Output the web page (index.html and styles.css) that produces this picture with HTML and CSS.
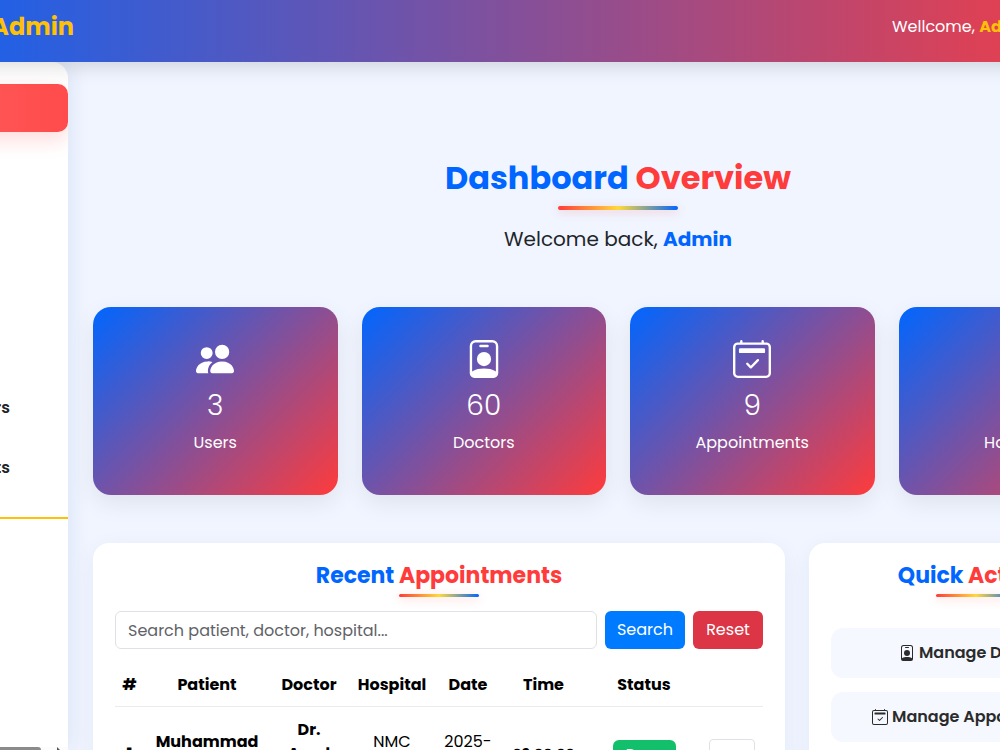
FILE: index.html
```
<!DOCTYPE html>
<html lang="en">
  <head>
    <meta charset="UTF-8" />
    <meta name="viewport" content="width=device-width, initial-scale=1.0" />
    <title>Admin Dashboard</title>
    <link rel="stylesheet" href="styles.css">
  </head>
  <body>
    <!-- Shared icons -->
    <svg class="sprite" aria-hidden="true">
      <symbol id="icon-people" viewBox="0 0 16 16">
        <path d="M7 14s-1 0-1-1 1-4 5-4 5 3 5 4-1 1-1 1zm4-6a3 3 0 1 0 0-6 3 3 0 0 0 0 6m-5.784 6A2.24 2.24 0 0 1 5 13c0-1.355.68-2.75 1.936-3.72A6.3 6.3 0 0 0 5 9c-4 0-5 3-5 4s1 1 1 1zM4.5 8a2.5 2.5 0 1 0 0-5 2.5 2.5 0 0 0 0 5"/>
      </symbol>
      <symbol id="icon-badge" viewBox="0 0 16 16">
        <path d="M6.5 2a.5.5 0 0 0 0 1h3a.5.5 0 0 0 0-1zM11 8a3 3 0 1 1-6 0 3 3 0 0 1 6 0"/>
        <path d="M4.5 0A2.5 2.5 0 0 0 2 2.5V14a2 2 0 0 0 2 2h8a2 2 0 0 0 2-2V2.5A2.5 2.5 0 0 0 11.5 0zM3 2.5A1.5 1.5 0 0 1 4.5 1h7A1.5 1.5 0 0 1 13 2.5v10.795a4.2 4.2 0 0 0-.776-.492C11.392 12.387 10.063 12 8 12s-3.392.387-4.224.803a4.2 4.2 0 0 0-.776.492z"/>
      </symbol>
      <symbol id="icon-calendar" viewBox="0 0 16 16">
        <path d="M10.854 8.146a.5.5 0 0 1 0 .708l-3 3a.5.5 0 0 1-.708 0l-1.5-1.5a.5.5 0 1 1 .708-.708L7.5 10.793l2.646-2.647a.5.5 0 0 1 .708 0"/>
        <path d="M3.5 0a.5.5 0 0 1 .5.5V1h8V.5a.5.5 0 0 1 1 0V1h1a2 2 0 0 1 2 2v11a2 2 0 0 1-2 2H2a2 2 0 0 1-2-2V3a2 2 0 0 1 2-2h1V.5a.5.5 0 0 1 .5-.5M2 2a1 1 0 0 0-1 1v11a1 1 0 0 0 1 1h12a1 1 0 0 0 1-1V3a1 1 0 0 0-1-1z"/>
        <path d="M2.5 4a.5.5 0 0 1 .5-.5h10a.5.5 0 0 1 .5.5v1a.5.5 0 0 1-.5.5H3a.5.5 0 0 1-.5-.5z"/>
      </symbol>
      <symbol id="icon-hospital" viewBox="0 0 16 16">
        <path d="M3 0h10v16H9v-3H7v3H3zm4 3v2H5v2h2v2h2V7h2V5H9V3z"/>
      </symbol>
    </svg>

    <div class="page">
      <!-- Top bar -->
      <header class="topbar">
        <a class="brand" href="#">Admin</a>
        <div class="welcome">Wellcome, <strong>Admin</strong></div>
      </header>

      <div class="layout">
        <!-- Sidebar -->
        <aside class="sidebar">
          <nav class="menu">
            <a class="menu-link active" href="#">Home</a>
            <a class="menu-link" href="#">Users</a>
            <a class="menu-link" href="#">Cities</a>
            <a class="menu-link" href="#">News</a>
            <a class="menu-link" href="#">Roles</a>
            <a class="menu-link end" href="#">Doctors</a>
            <a class="menu-link end" href="#">Appointments</a>
          </nav>
          <hr class="menu-line">
          <div class="scrollbar"><span class="thumb"></span><span class="arrow"></span></div>
        </aside>

        <main class="content">
          <div class="heading">
            <h1 class="title">Dashboard <span>Overview</span></h1>
            <p class="subtitle">Welcome back, <strong>Admin</strong></p>
          </div>

          <!-- Stats cards -->
          <section class="stats">
            <div class="stat">
              <svg class="stat-icon"><use href="#icon-people"/></svg>
              <div class="stat-number">3</div>
              <div class="stat-label">Users</div>
            </div>
            <div class="stat">
              <svg class="stat-icon"><use href="#icon-badge"/></svg>
              <div class="stat-number">60</div>
              <div class="stat-label">Doctors</div>
            </div>
            <div class="stat">
              <svg class="stat-icon"><use href="#icon-calendar"/></svg>
              <div class="stat-number">9</div>
              <div class="stat-label">Appointments</div>
            </div>
            <div class="stat">
              <svg class="stat-icon"><use href="#icon-hospital"/></svg>
              <div class="stat-number">8</div>
              <div class="stat-label">Hospitals</div>
            </div>
          </section>

          <div class="panels">
            <!-- Recent appointments -->
            <section class="panel">
              <h2 class="panel-title">Recent <span>Appointments</span></h2>
              <form class="search">
                <input class="search-input" type="text" aria-label="Search appointments" placeholder="Search patient, doctor, hospital...">
                <button class="btn btn-search" type="submit">Search</button>
                <button class="btn btn-reset" type="reset">Reset</button>
              </form>
              <table class="appointments">
                <colgroup>
                  <col class="col-id">
                  <col class="col-patient">
                  <col class="col-doctor">
                  <col class="col-hospital">
                  <col class="col-date">
                  <col class="col-time">
                  <col class="col-status">
                  <col class="col-action">
                </colgroup>
                <thead>
                  <tr>
                    <th>#</th>
                    <th>Patient</th>
                    <th>Doctor</th>
                    <th>Hospital</th>
                    <th>Date</th>
                    <th>Time</th>
                    <th>Status</th>
                    <th></th>
                  </tr>
                </thead>
                <tbody>
                  <tr>
                    <td class="strong">1</td>
                    <td class="strong">Muhammad Ali</td>
                    <td class="strong">Dr.<br>Asad<br>Ali</td>
                    <td>NMC<br>City</td>
                    <td>2025-<br>09-20</td>
                    <td class="strong time">09:00:00</td>
                    <td><span class="status">Done</span></td>
                    <td><button class="more" type="button" aria-label="More actions"></button></td>
                  </tr>
                </tbody>
              </table>
            </section>

            <!-- Quick actions -->
            <section class="panel">
              <h2 class="panel-title">Quick <span>Actions</span></h2>
              <div class="actions">
                <a class="action" href="#"><svg class="action-icon"><use href="#icon-badge"/></svg>Manage Doctors</a>
                <a class="action" href="#"><svg class="action-icon"><use href="#icon-calendar"/></svg>Manage Appointments</a>
              </div>
            </section>
          </div>
        </main>
      </div>
    </div>
  </body>
</html>
```
FILE: styles.css
```
* {
  box-sizing: border-box;
}

body {
  margin: 0;
  height: 100vh;
  overflow: hidden;
  font-family: Poppins, Inter, sans-serif;
  font-size: 16px;
  line-height: 24px;
  color: #212529;
  background: #f0f5ff;
}

a {
  text-decoration: none;
}

svg {
  fill: currentColor;
}

.sprite {
  display: none;
}

/* The page runs past both sides of the window */
.page {
  margin: 0 -168px 0 -182px;
}

/* Top bar */
.topbar {
  display: flex;
  justify-content: space-between;
  align-items: center;
  height: 62px;
  padding-bottom: 8px;
  background: linear-gradient(90deg, #0066ff, #ff3b3b);
  box-shadow: 0 4px 20px rgba(0, 0, 0, 0.15);
  position: relative;
  z-index: 1;
}

.brand {
  width: 256px;
  text-align: right;
  font-size: 24px;
  font-weight: 700;
  color: #ffc107;
}

.welcome {
  width: 276px;
  color: #fff;
}

.welcome strong {
  color: #ffc107;
}

.layout {
  display: flex;
}

/* Sidebar */
.sidebar {
  display: flex;
  flex-direction: column;
  flex: 0 0 250px;
  height: calc(100vh - 62px);
  padding-top: 22px;
  overflow: hidden;
  background: #fff;
  border-top-right-radius: 16px;
  box-shadow: 4px 0 20px rgba(0, 50, 130, 0.08);
}

.menu {
  display: flex;
  flex-direction: column;
  gap: 12px;
}

.menu-link {
  height: 48px;
  padding: 12px 20px;
  border-radius: 10px;
  font-weight: 600;
  color: #212529;
}

.menu-link.end {
  padding-right: 58px;
  text-align: right;
}

.menu-link.active {
  color: #fff;
  background: linear-gradient(90deg, #ff6b6b, #ff4b4b);
  box-shadow: 0 8px 20px rgba(255, 75, 75, 0.2);
}

.menu-line {
  width: 100%;
  margin: 25px 0 0;
  border: 0;
  border-top: 2px solid #ffc107;
}

.scrollbar {
  display: flex;
  align-items: flex-end;
  justify-content: flex-end;
  gap: 16px;
  height: 3px;
  margin-top: auto;
  padding-right: 8px;
  background: #fcfcfc;
}

.thumb {
  width: 223px;
  height: 3px;
  border-top-right-radius: 3px;
  background: #8b8b8b;
}

.arrow {
  border-left: 3px solid #555;
  border-top: 3px solid transparent;
}

/* Content */
.content {
  flex: 1;
  min-width: 0;
  padding: 96px 25px 25px;
}

.heading {
  margin-bottom: 53px;
  text-align: center;
}

.title,
.panel-title {
  margin: 0;
  font-weight: 700;
  color: #0066ff;
}

.title {
  font-size: 32px;
  line-height: 40px;
}

.title span,
.panel-title span {
  color: #ff3b3b;
}

.title::after,
.panel-title::after {
  content: "";
  display: block;
  margin: 8px auto 0;
  border-radius: 2px;
  background: linear-gradient(90deg, #ff3b3b, #ffd93b, #0066ff);
  box-shadow: 0 2px 10px rgba(255, 59, 59, 0.25);
}

.title::after {
  width: 120px;
  height: 4px;
}

.subtitle {
  margin: 14px 0 0;
  font-size: 20px;
  line-height: 30px;
}

.subtitle strong {
  color: #0066ff;
}

/* Stats cards */
.stats {
  display: grid;
  grid-template-columns: repeat(4, 1fr);
  gap: 24px;
  margin-bottom: 48px;
}

.stat {
  display: flex;
  flex-direction: column;
  align-items: center;
  padding: 33px 24px 40px;
  border-radius: 18px;
  color: #fff;
  background: linear-gradient(135deg, #0066ff, #ff3b3b);
  box-shadow: 0 8px 25px rgba(0, 0, 0, 0.08);
}

.stat-icon {
  width: 38px;
  height: 38px;
}

.stat-number {
  margin-top: 11px;
  font-size: 28px;
  font-weight: 300;
  line-height: 34px;
}

.stat-label {
  margin-top: 8px;
}

/* Panels */
.panels {
  display: grid;
  grid-template-columns: 692fr 334fr;
  gap: 24px;
}

.panel {
  padding: 19px 22px 22px;
  border-radius: 16px;
  background: #fff;
  box-shadow: 0 6px 25px rgba(0, 50, 130, 0.06);
}

.panel-title {
  font-size: 22px;
  line-height: 28px;
  text-align: center;
}

.panel-title::after {
  width: 80px;
  height: 3px;
  margin-top: 4px;
}

.search {
  display: flex;
  gap: 8px;
  margin: 14px 0 12px;
}

.search-input {
  flex: 1;
  min-width: 0;
  height: 38px;
  padding: 6px 12px;
  border: 1px solid #dee2e6;
  border-radius: 6px;
  font: inherit;
}

.search-input::placeholder {
  color: #5f6368;
  opacity: 1;
}

.btn {
  height: 38px;
  padding: 0;
  border: 0;
  border-radius: 6px;
  font: inherit;
  color: #fff;
}

.btn-search {
  width: 80px;
  background: #007bff;
}

.btn-reset {
  width: 70px;
  background: #dc3545;
}

.appointments {
  width: 100%;
  table-layout: fixed;
  border-collapse: collapse;
  text-align: center;
  color: #000;
}

.appointments th,
.appointments td {
  padding: 11px 0;
  border-bottom: 1px solid #e9ecef;
}

.appointments th {
  height: 45px;
  padding: 12px 0 9px;
}

.appointments td {
  height: 94px;
}

.col-id {
  width: 29px;
}

.col-patient {
  width: 126px;
}

.col-doctor {
  width: 78px;
}

.col-hospital {
  width: 88px;
}

.col-date {
  width: 64px;
}

.col-time {
  width: 87px;
}

.col-status {
  width: 114px;
}

.strong {
  font-weight: 700;
}

.time {
  font-size: 14px;
}

.status {
  display: inline-block;
  width: 63px;
  padding: 2px 0;
  border-radius: 6px;
  font-size: 14px;
  color: #fff;
  background: #12bf6b;
}

.more {
  width: 46px;
  height: 30px;
  border: 1px solid #dee2e6;
  border-radius: 4px;
  background: #fff;
  vertical-align: middle;
}

/* Quick actions */
.actions {
  display: flex;
  flex-direction: column;
  gap: 14px;
  margin-top: 31px;
}

.action {
  display: flex;
  justify-content: center;
  align-items: center;
  gap: 4px;
  padding: 13px;
  border-radius: 12px;
  font-weight: 600;
  color: #2b2b2b;
  background: #f5f8ff;
}

.action-icon {
  width: 16px;
  height: 16px;
}
```
